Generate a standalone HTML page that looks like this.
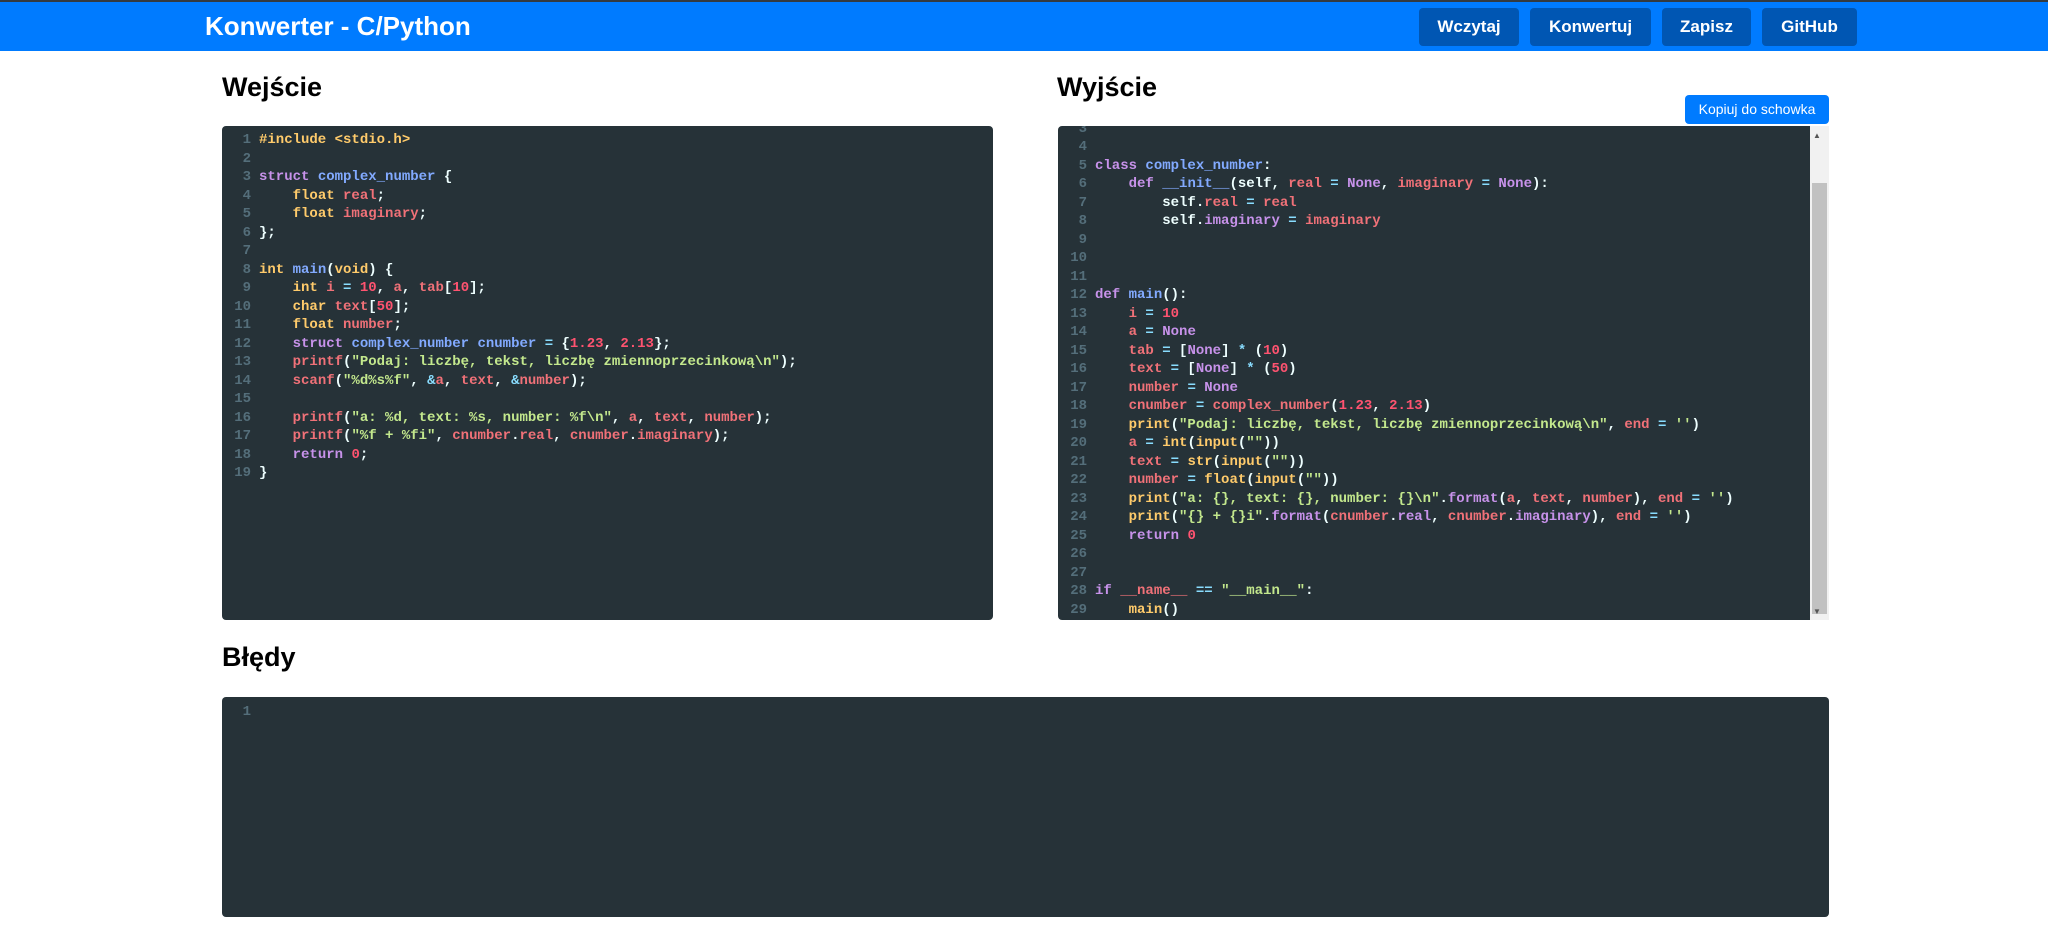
<!DOCTYPE html>
<html><head><meta charset="utf-8"><style>
*{box-sizing:border-box;margin:0;padding:0}
body{width:2048px;height:947px;background:#fff;font-family:"Liberation Sans",Arial,sans-serif;position:relative;overflow:hidden}
.nav{position:absolute;left:0;top:0;width:2048px;height:51px;background:#007bff;border-top:2px solid #343a40}
.brand{position:absolute;left:205px;top:9px;color:#fff;font-size:26px;font-weight:bold}
.btn{position:absolute;top:6px;height:38px;background:#0056b3;color:#fff;font-weight:bold;font-size:17px;border-radius:4px;text-align:center;line-height:38px}
h2{position:absolute;font-size:27px;font-weight:bold;color:#000}
.ed{position:absolute;background:#263238;border-radius:4px;overflow:hidden;font-family:"Liberation Mono",monospace;font-size:14px;font-weight:bold;line-height:18.5px;color:#eeffff}
.ln{position:absolute;text-align:right;color:#546e7a;white-space:pre}
.code{position:absolute;white-space:pre}
.k{color:#c792ea}.t{color:#ffcb6b}.f{color:#82aaff}.v{color:#f07178}.n{color:#ff5370}.s{color:#c3e88d}.o{color:#89ddff}.w{color:#eeffff}
.copy{position:absolute;left:1685px;top:95px;width:144px;height:29px;background:#007bff;color:#fff;font-size:14px;border-radius:4px;text-align:center;line-height:29px}
.sb{position:absolute;left:1810px;top:126px;width:19px;height:494px;background:#f1f1f1}
</style></head><body>
<div class="nav">
<div class="brand">Konwerter - C/Python</div>
<div class="btn" style="left:1419px;width:100px">Wczytaj</div>
<div class="btn" style="left:1530px;width:121px">Konwertuj</div>
<div class="btn" style="left:1662px;width:89px">Zapisz</div>
<div class="btn" style="left:1762px;width:95px">GitHub</div>
</div>
<h2 style="left:222px;top:72px">Wejście</h2>
<h2 style="left:1057px;top:72px">Wyjście</h2>
<div class="copy">Kopiuj do schowka</div>
<h2 style="left:222px;top:642px">Błędy</h2>

<div class="ed" style="left:222px;top:126px;width:771px;height:494px">
<div class="ln" style="left:0;top:5px;width:29px">1
2
3
4
5
6
7
8
9
10
11
12
13
14
15
16
17
18
19</div>
<div class="code" style="left:37px;top:5px"><span class="t">#include &lt;stdio.h&gt;</span>

<span class="k">struct</span> <span class="f">complex_number</span> {
    <span class="t">float</span> <span class="v">real</span>;
    <span class="t">float</span> <span class="v">imaginary</span>;
};

<span class="t">int</span> <span class="f">main</span>(<span class="t">void</span>) {
    <span class="t">int</span> <span class="v">i</span> <span class="o">=</span> <span class="n">10</span>, <span class="v">a</span>, <span class="v">tab</span>[<span class="n">10</span>];
    <span class="t">char</span> <span class="v">text</span>[<span class="n">50</span>];
    <span class="t">float</span> <span class="v">number</span>;
    <span class="k">struct</span> <span class="f">complex_number</span> <span class="f">cnumber</span> <span class="o">=</span> {<span class="n">1.23</span>, <span class="n">2.13</span>};
    <span class="v">printf</span>(<span class="s">"Podaj: liczbę, tekst, liczbę zmiennoprzecinkową\n"</span>);
    <span class="v">scanf</span>(<span class="s">"%d%s%f"</span>, <span class="o">&amp;</span><span class="v">a</span>, <span class="v">text</span>, <span class="o">&amp;</span><span class="v">number</span>);

    <span class="v">printf</span>(<span class="s">"a: %d, text: %s, number: %f\n"</span>, <span class="v">a</span>, <span class="v">text</span>, <span class="v">number</span>);
    <span class="v">printf</span>(<span class="s">"%f + %fi"</span>, <span class="v">cnumber</span>.<span class="v">real</span>, <span class="v">cnumber</span>.<span class="v">imaginary</span>);
    <span class="k">return</span> <span class="n">0</span>;
}</div>
</div>

<div class="ed" style="left:1058px;top:126px;width:771px;height:494px;border-radius:4px 0 0 4px">
<div class="ln" style="left:0;top:-6.5px;width:29px">3
4
5
6
7
8
9
10
11
12
13
14
15
16
17
18
19
20
21
22
23
24
25
26
27
28
29</div>
<div class="code" style="left:37px;top:-6.5px">

<span class="k">class</span> <span class="f">complex_number</span>:
    <span class="k">def</span> <span class="f">__init__</span>(<span class="w">self</span>, <span class="v">real</span> <span class="o">=</span> <span class="k">None</span>, <span class="v">imaginary</span> <span class="o">=</span> <span class="k">None</span>):
        <span class="w">self</span>.<span class="v">real</span> <span class="o">=</span> <span class="v">real</span>
        <span class="w">self</span>.<span class="k">imaginary</span> <span class="o">=</span> <span class="v">imaginary</span>



<span class="k">def</span> <span class="f">main</span>():
    <span class="v">i</span> <span class="o">=</span> <span class="n">10</span>
    <span class="v">a</span> <span class="o">=</span> <span class="k">None</span>
    <span class="v">tab</span> <span class="o">=</span> [<span class="k">None</span>] <span class="o">*</span> (<span class="n">10</span>)
    <span class="v">text</span> <span class="o">=</span> [<span class="k">None</span>] <span class="o">*</span> (<span class="n">50</span>)
    <span class="v">number</span> <span class="o">=</span> <span class="k">None</span>
    <span class="v">cnumber</span> <span class="o">=</span> <span class="v">complex_number</span>(<span class="n">1.23</span>, <span class="n">2.13</span>)
    <span class="t">print</span>(<span class="s">"Podaj: liczbę, tekst, liczbę zmiennoprzecinkową\n"</span>, <span class="v">end</span> <span class="o">=</span> <span class="s">''</span>)
    <span class="v">a</span> <span class="o">=</span> <span class="t">int</span>(<span class="t">input</span>(<span class="s">""</span>))
    <span class="v">text</span> <span class="o">=</span> <span class="t">str</span>(<span class="t">input</span>(<span class="s">""</span>))
    <span class="v">number</span> <span class="o">=</span> <span class="t">float</span>(<span class="t">input</span>(<span class="s">""</span>))
    <span class="t">print</span>(<span class="s">"a: {}, text: {}, number: {}\n"</span>.<span class="k">format</span>(<span class="v">a</span>, <span class="v">text</span>, <span class="v">number</span>), <span class="v">end</span> <span class="o">=</span> <span class="s">''</span>)
    <span class="t">print</span>(<span class="s">"{} + {}i"</span>.<span class="k">format</span>(<span class="v">cnumber</span>.<span class="k">real</span>, <span class="v">cnumber</span>.<span class="k">imaginary</span>), <span class="v">end</span> <span class="o">=</span> <span class="s">''</span>)
    <span class="k">return</span> <span class="n">0</span>


<span class="k">if</span> <span class="v">__name__</span> <span class="o">==</span> <span class="s">"__main__"</span>:
    <span class="t">main</span>()</div>
</div>
<div class="sb"><div style="position:absolute;left:3px;top:5px;font-size:8px;color:#555">▲</div><div style="position:absolute;left:2px;top:57px;width:15px;height:431px;background:#c1c1c1"></div><div style="position:absolute;left:3px;top:481px;font-size:8px;color:#555">▼</div></div>

<div class="ed" style="left:222px;top:697px;width:1607px;height:220px">
<div class="ln" style="left:0;top:6px;width:29px">1</div>
</div>
</body></html>
